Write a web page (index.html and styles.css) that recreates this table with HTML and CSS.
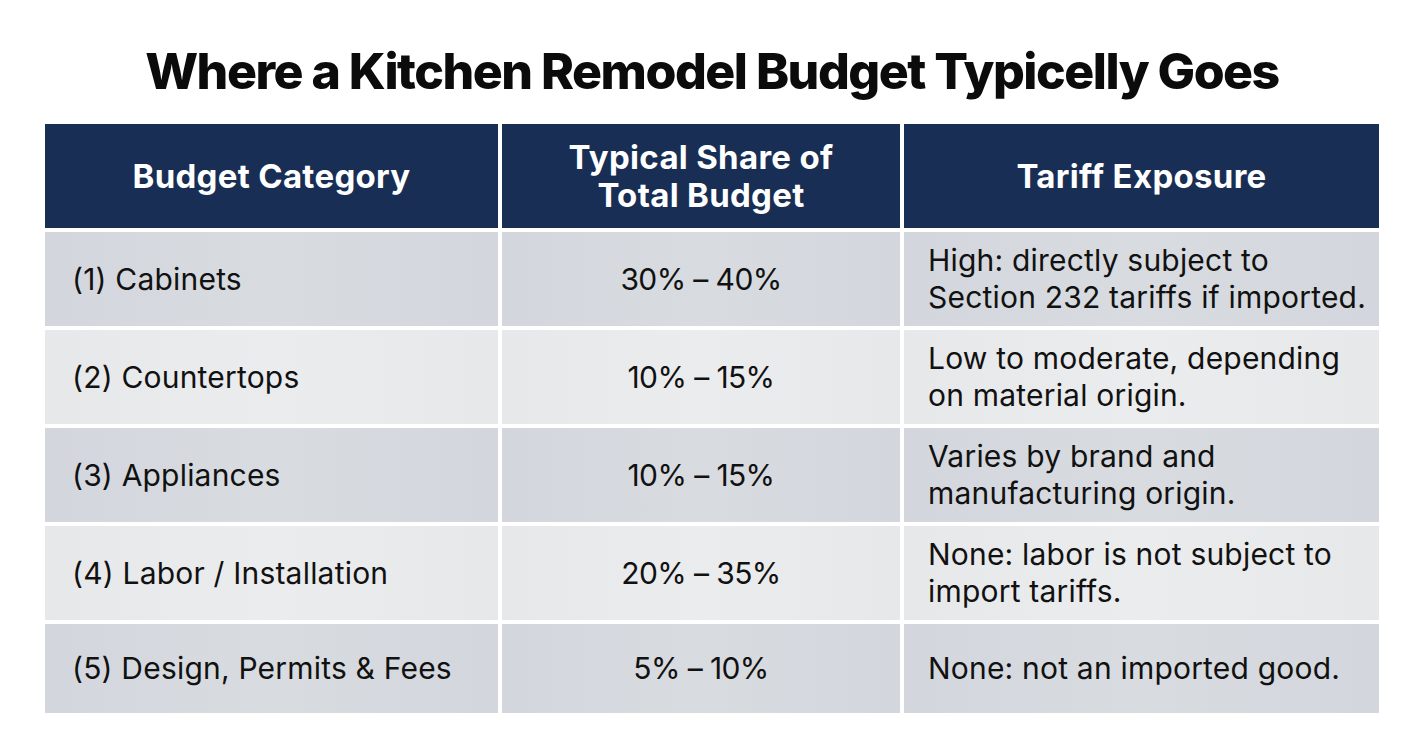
FILE: index.html
```html
<!DOCTYPE html>
<html lang="en">
<head>
<meta charset="utf-8">
<title>Where a Kitchen Remodel Budget Typicelly Goes</title>
<link rel="stylesheet" href="styles.css">
</head>
<body>
<main class="page">
  <h1 class="title">Where a Kitchen Remodel Budget Typicelly Goes</h1>
  <div class="table">
    <div class="cell head">Budget Category</div>
    <div class="cell head">Typical Share of<br>Total Budget</div>
    <div class="cell head">Tariff Exposure</div>

    <div class="cell dark cat">(1) Cabinets</div>
    <div class="cell dark share">30% – 40%</div>
    <div class="cell dark exp">High: directly subject to<br>Section 232 tariffs if imported.</div>

    <div class="cell light cat">(2) Countertops</div>
    <div class="cell light share">10% – 15%</div>
    <div class="cell light exp">Low to moderate, depending<br>on material origin.</div>

    <div class="cell dark cat">(3) Appliances</div>
    <div class="cell dark share">10% – 15%</div>
    <div class="cell dark exp">Varies by brand and<br>manufacturing origin.</div>

    <div class="cell light cat">(4) Labor / Installation</div>
    <div class="cell light share">20% – 35%</div>
    <div class="cell light exp">None: labor is not subject to<br>import tariffs.</div>

    <div class="cell dark cat">(5) Design, Permits &amp; Fees</div>
    <div class="cell dark share">5% – 10%</div>
    <div class="cell dark exp">None: not an imported good.</div>
  </div>
</main>
</body>
</html>
```
FILE: styles.css
```css
* { box-sizing: border-box; }
html, body { margin: 0; padding: 0; background: #ffffff; }
body {
  font-family: Inter, "Noto Sans", "Liberation Sans", sans-serif;
  color: #111111;
  width: 1424px;
  height: 752px;
  overflow: hidden;
}
.page {
  padding: 40px 0 0 45px;
}
.title {
  margin: 0 0 22px 0;
  width: 1334px;
  text-align: center;
  font-size: 50px;
  line-height: 62px;
  font-weight: 800;
  letter-spacing: -1.5px;
  color: #0b0b0b;
}
.table {
  display: grid;
  grid-template-columns: 453px 398px 475px;
  grid-template-rows: 104px 94px 94px 94px 94px 89px;
  gap: 4px;
  width: 1334px;
}
.cell {
  display: flex;
  align-items: center;
  font-size: 30px;
  line-height: 37px;
  font-weight: 400;
  letter-spacing: 0.2px;
  color: #111111;
}
.head {
  background: #182e54;
  color: #ffffff;
  font-weight: 700;
  font-size: 33px;
  line-height: 38px;
  letter-spacing: 0.3px;
  justify-content: center;
  text-align: center;
}
.dark { background: linear-gradient(90deg, #d3d7dd 0%, #d8dbe0 50%, #d3d7dd 100%); }
.light { background: linear-gradient(90deg, #e7e8ea 0%, #ebecee 50%, #e7e8ea 100%); }
.cat { padding-left: 27px; }
.share { justify-content: center; text-align: center; letter-spacing: -0.6px; }
.exp { padding-left: 24px; }
```
